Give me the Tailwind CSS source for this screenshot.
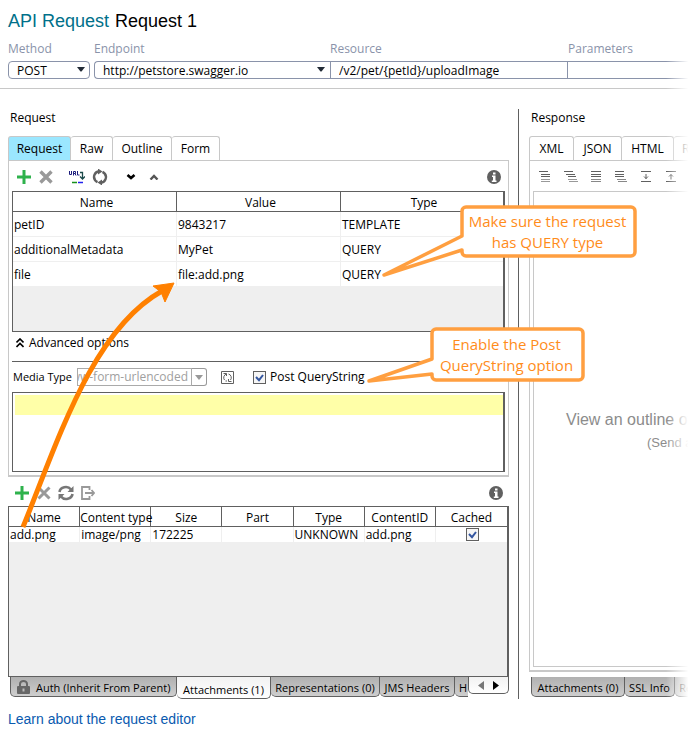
<!DOCTYPE html>
<html lang="en">
<head>
  <meta charset="UTF-8" />
  <meta name="viewport" content="width=device-width, initial-scale=1.0"/>
  <title>API Request - Request 1</title>
  <script src="https://cdn.jsdelivr.net/npm/@tailwindcss/browser@4"></script>
</head>
<body class="bg-white text-black text-[12px] leading-[18px] font-['Open_Sans','Noto_Sans',sans-serif]">

  <div class="relative min-h-screen overflow-hidden">

    <!-- Header -->
    <header class="border-b border-[#c8c8c8] pl-2 pb-[9px]">
      <h1 class="pt-[9px] flex gap-[6px] text-[18px] leading-6 font-['Liberation_Sans',Arial,sans-serif]">
        <span class="text-[#00708a]">API Request</span>
        <span>Request 1</span>
      </h1>
      <div class="mt-[7px] grid grid-cols-[86fr_236fr_238fr_130fr] text-[#8a93aa]">
        <label for="method">Method</label>
        <label for="endpoint">Endpoint</label>
        <label for="resource">Resource</label>
        <label for="params">Parameters</label>
      </div>
      <div class="mt-[3px] grid grid-cols-[82fr_240fr_237fr_131fr] h-[18px]">
        <div class="relative">
          <select id="method" class="block w-full h-[18px] appearance-none rounded-[4px] border border-[#8a93aa] bg-white pl-2 pt-px leading-4">
            <option>POST</option>
          </select>
          <svg class="absolute right-[5px] top-[6px] pointer-events-none" width="8" height="5"><path d="M0 0h8L4.500 4.500h-1z" fill="#222b36"/></svg>
        </div>
        <div class="relative pl-1">
          <select id="endpoint" class="block w-full h-[18px] appearance-none rounded-l-[4px] border border-r-0 border-[#8a93aa] bg-white pl-2 pt-px leading-4">
            <option>http://petstore.swagger.io</option>
          </select>
          <svg class="absolute right-[5px] top-[6px] pointer-events-none" width="8" height="5"><path d="M0 0h8L4.500 4.500h-1z" fill="#222b36"/></svg>
        </div>
        <input id="resource" type="text" value="/v2/pet/{petId}/uploadImage" class="min-w-0 h-[18px] border border-r-0 border-[#8a93aa] pl-2 pt-[2px]" />
        <input id="params" type="text" class="min-w-0 h-[18px] border border-r-0 border-[#8a93aa] pl-2 pt-[2px]" />
      </div>
    </header>

    <main class="grid grid-cols-[518fr_180fr] pt-5">

      <!-- Request side -->
      <section class="relative min-w-0 pl-2 pr-[9px] flex flex-col">
        <h2 class="h-[27px] pl-[2px]">Request</h2>
        <div class="flex h-6">
          <button class="w-[63px] rounded-t-[3px] border border-b-0 border-[#c8c8c8] bg-[#9be7ff]">Request</button>
          <button class="w-[42px] rounded-t-[3px] border border-b-0 border-l-0 border-[#c8c8c8]">Raw</button>
          <button class="w-[59px] rounded-t-[3px] border border-b-0 border-l-0 border-[#c8c8c8]">Outline</button>
          <button class="w-12 rounded-t-[3px] border border-b-0 border-l-0 border-[#c8c8c8]">Form</button>
        </div>

        <div class="border border-b-2 border-[#c8c8c8] px-[3px] pb-[3px]">
          <div class="flex items-center h-[30px] pt-[2px] pl-px pr-1">
            <button aria-label="Add" class="w-[22px] flex justify-center"><svg width="14" height="14"><path d="M7 0v14M0 7h14" stroke="#2eb24c" stroke-width="3"/></svg></button>
            <button aria-label="Remove" class="w-[22px] flex justify-center"><svg width="14" height="14"><path d="M1.500 1.500l11 11M12.500 1.500l-11 11" stroke="#999" stroke-width="3.400"/></svg></button>
            <button aria-label="Update from URL" class="ml-[9px] w-[22px] flex justify-center">
              <svg width="16" height="14" viewBox="0 0 16 14">
                <path d="M.5 1v3.500h2V1M4.500 5.500V1.500h2v2h-2M6 3.500l1 2M8.500 1v4h2" fill="none" stroke="#1c1c7c"/>
                <path d="M11 2.500h2.500v6M11 6.500L13.500 9 16 6.500" fill="none" stroke="#1b4a4a" stroke-width="1.300"/>
                <path d="M3 12.500h5" stroke="#18901c" stroke-width="1.500"/><path d="M9 12.500h5" stroke="#2222ee" stroke-width="1.500"/>
              </svg>
            </button>
            <button aria-label="Refresh" class="ml-px w-[22px] flex justify-center">
              <svg width="16" height="16" viewBox="0 0 16 16" fill="none" stroke="#606060" stroke-width="2.400">
                <path d="M3.200 11.500A5.800 5.800 0 0 1 7 2.300M10.500 2.900a5.800 5.800 0 0 1 3.300 4.500M12.800 4.500A5.800 5.800 0 0 1 9 13.700M5.500 13.100a5.800 5.800 0 0 1-3.300-4.500"/>
                <path d="M6 -.5l4.500 3-4.500 3zM10 10.500l-4.500 3 4.500 3z" fill="#606060" stroke="none"/>
              </svg>
            </button>
            <button aria-label="Move down" class="ml-[9px] w-[22px] flex justify-center"><svg width="10" height="6"><path d="M1.500 1l3.500 3 3.500-3" fill="none" stroke="#000" stroke-width="2.600"/></svg></button>
            <button aria-label="Move up" class="ml-px w-[22px] flex justify-center"><svg width="10" height="6"><path d="M1.500 5.500l3.500-3.500 3.500 3.500" fill="none" stroke="#555" stroke-width="2.400"/></svg></button>
            <button aria-label="Info" class="ml-auto"><svg width="14" height="14"><circle cx="7" cy="7" r="7" fill="#606060"/><path d="M6 2.500h2.500v2H6zM5 5.500h3.500v5h1v1.500H4.800v-1.500H6V7H5z" fill="#fff"/></svg></button>
          </div>

          <div class="h-[141px] border border-r-2 border-[#606060] bg-[#efefef]">
            <table class="w-full table-fixed border-separate border-spacing-0 bg-white">
              <thead>
                <tr class="h-5">
                  <th class="w-[164px] p-0 pl-1 pt-[2px] leading-[17px] font-normal border-r border-b border-[#606060]">Name</th>
                  <th class="w-[164px] p-0 pl-1 pt-[2px] leading-[17px] font-normal border-r border-b border-[#606060]">Value</th>
                  <th class="p-0 pl-1 pt-[2px] leading-[17px] font-normal border-b border-[#606060]">Type</th>
                </tr>
              </thead>
              <tbody>
                <tr class="h-[25px]">
                  <td class="p-0 pt-[2px] pl-px border-r border-b border-[#efefef]">petID</td>
                  <td class="p-0 pt-[2px] pl-px border-r border-b border-[#efefef]">9843217</td>
                  <td class="p-0 pt-[2px] pl-px border-b border-[#efefef]">TEMPLATE</td>
                </tr>
                <tr class="h-[25px]">
                  <td class="p-0 pt-[2px] pl-px border-r border-b border-[#efefef]">additionalMetadata</td>
                  <td class="p-0 pt-[2px] pl-px border-r border-b border-[#efefef]">MyPet</td>
                  <td class="p-0 pt-[2px] pl-px border-b border-[#efefef]">QUERY</td>
                </tr>
                <tr class="h-[25px]">
                  <td class="p-0 pt-[2px] pl-px border-r border-b border-[#efefef]">file</td>
                  <td class="p-0 pt-[2px] pl-px border-r border-b border-[#efefef]">file:add.png</td>
                  <td class="p-0 pt-[2px] pl-px border-b border-[#efefef]">QUERY</td>
                </tr>
              </tbody>
            </table>
          </div>

          <div class="h-[30px] border-b border-[#606060]">
            <button class="flex items-center gap-[5px] h-[22px] pl-1">
              <svg width="8" height="10" fill="none" stroke="#000" stroke-width="1.600"><path d="M.5 4.500L4 1l3.500 3.500M.5 9L4 5.500 7.500 9"/></svg>
              Advanced options
            </button>
          </div>

          <div class="flex items-center h-[30px] pl-px">
            <label for="media" class="w-16 whitespace-nowrap text-[11px]">Media Type</label>
            <input id="media" dir="rtl" disabled value="application/x-www-form-urlencoded" class="w-[115px] h-[18px] border border-[#aaa] pr-[3px] text-[#a0a0a0]" />
            <button disabled aria-label="Media types" class="w-[15px] h-[18px] flex items-center justify-center rounded-r-[3px] border border-l-0 border-[#999]"><svg width="8" height="5"><path d="M0 0h8L4 5z" fill="#999"/></svg></button>
            <button aria-label="Recreate" class="ml-[14px]">
              <svg width="13" height="13" fill="none" stroke="#606060">
                <path d="M.5.5h12v12H.5z"/>
                <path d="M3.500 9A3.800 3.800 0 0 1 5.500 3M7.500 3a3.800 3.800 0 0 1 2 6M2.500 2.500h3V5M10.500 10.500h-3V8M4.500 10h1.500"/>
              </svg>
            </button>
            <label class="ml-[19px] flex items-center gap-1">
              <span class="relative flex">
                <input type="checkbox" checked class="appearance-none size-[13px] border border-[#606060] bg-[#f6f6f6]" />
                <svg class="absolute left-[2px] top-[3px] pointer-events-none" width="9" height="8"><path d="M1 3l3 3.200L8 1" fill="none" stroke="#3456a0" stroke-width="2"/></svg>
              </span>
              Post QueryString
            </label>
          </div>

          <div class="relative h-20 border border-r-2 border-[#606060] pl-[2px] pt-[2px]">
            <div class="h-5 bg-[#ffffa8]"></div>
            <textarea aria-label="Body" class="absolute inset-0 resize-none bg-transparent px-1"></textarea>
          </div>
        </div>

        <!-- Attachments -->
        <div class="flex items-center h-[29px] pt-[2px] pl-[3px] pr-[6px]">
          <button aria-label="Add attachment" class="w-[22px] flex justify-center"><svg width="14" height="14"><path d="M7 0v14M0 7h14" stroke="#2eb24c" stroke-width="3"/></svg></button>
          <button aria-label="Remove attachment" class="w-[22px] flex justify-center"><svg width="14" height="14"><path d="M1.500 1.500l11 11M12.500 1.500l-11 11" stroke="#999" stroke-width="3"/></svg></button>
          <button aria-label="Reload" class="w-[22px] flex justify-center">
            <svg width="16" height="16" viewBox="0 0 16 16" fill="none" stroke="#777" stroke-width="2.600">
              <path d="M1.500 7a6.300 5.500 0 0 1 11.500-2.500M14.500 9A6.300 5.500 0 0 1 3 11.500"/>
              <path d="M15.500 1v6h-6zM.5 15V9h6z" fill="#777" stroke="none"/>
            </svg>
          </button>
          <button aria-label="Export" class="w-[22px] flex justify-center"><svg width="14" height="14" fill="none" stroke="#999" stroke-width="1.800"><path d="M8.500 4V1H1v12h7.500v-3M4 7h9M10.500 4l2.500 3-2.500 3"/></svg></button>
          <button aria-label="Attachment info" class="ml-auto"><svg width="14" height="14"><circle cx="7" cy="7" r="7" fill="#606060"/><path d="M6 2.500h2.500v2H6zM5 5.500h3.500v5h1v1.500H4.800v-1.500H6V7H5z" fill="#fff"/></svg></button>
        </div>

        <div class="h-[171px] border border-r-2 border-[#606060] bg-[#efefef]">
          <table class="w-full table-fixed border-separate border-spacing-0 bg-white whitespace-nowrap">
            <thead>
              <tr class="h-5">
                <th class="p-0 pt-[2px] leading-[17px] font-normal border-r border-b border-[#606060]">Name</th>
                <th class="p-0 pt-[2px] leading-[17px] font-normal border-r border-b border-[#606060]">Content type</th>
                <th class="p-0 pt-[2px] leading-[17px] font-normal border-r border-b border-[#606060]">Size</th>
                <th class="p-0 pt-[2px] leading-[17px] font-normal border-r border-b border-[#606060]">Part</th>
                <th class="p-0 pt-[2px] leading-[17px] font-normal border-r border-b border-[#606060]">Type</th>
                <th class="p-0 pt-[2px] leading-[17px] font-normal border-r border-b border-[#606060]">ContentID</th>
                <th class="p-0 pt-[2px] leading-[17px] font-normal border-b border-[#606060]">Cached</th>
              </tr>
            </thead>
            <tbody>
              <tr class="leading-[15px]">
                <td class="py-0 px-px border-r border-[#efefef]">add.png</td>
                <td class="py-0 px-px border-r border-[#efefef]">image/png</td>
                <td class="py-0 px-px border-r border-[#efefef]">172225</td>
                <td class="py-0 px-px border-r border-[#efefef]"></td>
                <td class="py-0 px-px border-r border-[#efefef]">UNKNOWN</td>
                <td class="py-0 px-px border-r border-[#efefef]">add.png</td>
                <td class="p-0 pl-[2px]">
                  <label class="relative flex w-[13px] mx-auto">
                    <input type="checkbox" checked aria-label="Cached" class="appearance-none size-[13px] border border-[#606060] bg-[#f6f6f6]" />
                    <svg class="absolute left-[2px] top-[3px] pointer-events-none" width="9" height="8"><path d="M1 3l3 3.200L8 1" fill="none" stroke="#3456a0" stroke-width="2"/></svg>
                  </label>
                </td>
              </tr>
            </tbody>
          </table>
        </div>

        <div class="flex items-start h-[22px] pl-[2px] whitespace-nowrap text-[11px]">
          <button class="w-[167px] h-[20px] flex items-center gap-[6px] pt-[2px] pl-[6px] rounded-b-[5px] border border-t-0 border-[#606060] bg-linear-to-b from-[#b0b0b0] to-[#cecece]">
            <svg class="mb-[2px]" width="13" height="14"><path d="M3 7V4a3.500 3 0 0 1 7 0v3" fill="none" stroke="#666" stroke-width="2"/><rect y="6" width="13" height="8" rx="1" fill="#666"/><path d="M6.500 8.500v3" stroke="#bbb" stroke-width="2"/></svg>
            Auth (Inherit From Parent)
          </button>
          <button class="w-[94px] h-[22px] pt-[4px] rounded-b-[5px] border border-t-0 border-l-0 border-[#606060] bg-linear-to-b from-[#f2f2f2] to-white">Attachments (1)</button>
          <button class="w-[109px] h-[20px] pt-[2px] rounded-b-[5px] border border-t-0 border-l-0 border-[#606060] bg-linear-to-b from-[#b0b0b0] to-[#cecece]">Representations (0)</button>
          <button class="w-[75px] h-[20px] pt-[2px] rounded-b-[5px] border border-t-0 border-l-0 border-[#606060] bg-linear-to-b from-[#b0b0b0] to-[#cecece]">JMS Headers</button>
          <button class="w-[13px] h-[20px] pt-[2px] pl-1 overflow-hidden text-left rounded-bl-[5px] border-b border-[#606060] bg-linear-to-b from-[#b0b0b0] to-[#cecece]">H</button>
          <div class="flex-1 flex items-center justify-center gap-[9px] h-[17px] pt-px rounded-b-[5px] border border-t-0 border-[#606060] bg-linear-to-b from-[#f2f2f2] to-white">
            <button aria-label="Previous tabs"><svg width="6" height="9"><path d="M6 0v9L0 4.500z" fill="#777"/></svg></button>
            <button aria-label="Next tabs"><svg width="6" height="9"><path d="M0 0v9l6-4.500z" fill="#000"/></svg></button>
          </div>
        </div>

        <!-- Annotations -->
        <svg class="absolute left-0 -top-5 pointer-events-none" width="650" height="560" fill="none">
          <path d="M23 438C58 352 92 241 162 202" stroke="#ff8000" stroke-width="5"/>
          <path d="M174 194L165 213L161 203L153 197Z" fill="#ff8000" stroke="#ff8000"/>
          <g fill="#fff" stroke="#ff9f40" stroke-width="3.500" stroke-linejoin="round">
            <path d="M466 118H631a4 4 0 0 1 4 4V163a4 4 0 0 1-4 4H466a4 4 0 0 1-4-4V161L384 186L462 147V122a4 4 0 0 1 4-4Z"/>
            <path d="M436 240H579a4 4 0 0 1 4 4V287a4 4 0 0 1-4 4H436a4 4 0 0 1-4-4V285L369 292L432 270V244a4 4 0 0 1 4-4Z"/>
          </g>
        </svg>
        <p class="absolute left-[460px] top-[102px] w-[175px] text-center whitespace-nowrap text-[15px] leading-[21px] text-[#ff8c1a]">Make sure the request<br>has QUERY type</p>
        <p class="absolute left-[430px] top-[225px] w-[153px] text-center whitespace-nowrap text-[15px] leading-[21px] text-[#ff8c1a]">Enable the Post<br>QueryString option</p>
      </section>

      <!-- Response side -->
      <section class="min-w-0 border-l border-[#606060] pl-[10px] flex flex-col whitespace-nowrap">
        <h2 class="h-[27px] pl-[2px]">Response</h2>
        <div class="flex h-6">
          <button class="w-[45px] shrink-0 rounded-t-[3px] border border-b-0 border-[#c8c8c8]">XML</button>
          <button class="w-12 shrink-0 rounded-t-[3px] border border-b-0 border-l-0 border-[#c8c8c8]">JSON</button>
          <button class="w-[52px] shrink-0 rounded-t-[3px] border border-b-0 border-l-0 border-[#c8c8c8]">HTML</button>
          <button class="flex-1 rounded-t-[3px] border border-b-0 border-l-0 border-[#c8c8c8] overflow-hidden pl-2 text-left">RAW</button>
        </div>
        <div class="flex-1 flex flex-col border-l border-t border-b-2 border-[#c8c8c8] pl-[3px] pb-[3px]">
          <div class="flex items-center h-[30px] pt-[2px]">
            <button aria-label="Level 1" class="w-[25px] flex justify-center"><svg width="13" height="12" stroke="#606060"><path d="M0 .5h9M2 3.500h9M2 5.500h9"/><path d="M2 8.500h9M2 10.500h9" stroke="#999"/></svg></button>
            <button aria-label="Level 2" class="w-[25px] flex justify-center"><svg width="14" height="12" stroke="#606060"><path d="M0 .5h9M2 3.500h9M4 5.500h8"/><path d="M4 8.500h9M5 10.500h9" stroke="#999"/></svg></button>
            <button aria-label="Level 3" class="w-[25px] flex justify-center"><svg width="10" height="12" stroke="#606060"><path d="M0 .5h10M0 3.500h10M0 5.500h10"/><path d="M0 8.500h10M0 10.500h10" stroke="#888"/></svg></button>
            <button aria-label="Level 4" class="w-[25px] flex justify-center"><svg width="12" height="12" stroke="#606060"><path d="M0 .5h9M0 3.500h9M0 5.500h9"/><path d="M2 8.500h9M3 10.500h9" stroke="#888"/></svg></button>
            <button aria-label="Expand" class="w-[25px] flex justify-center"><svg width="10" height="12" stroke="#606060" fill="none"><path d="M0 .5h10M0 10.500h10M5 3v5M3 5.500l2 2 2-2"/></svg></button>
            <button aria-label="Collapse" class="w-[25px] flex justify-center"><svg width="10" height="12" stroke="#606060" fill="none"><path d="M0 .5h10M0 10.500h10M5 8.500v-5M3 5.500l2-2 2 2"/></svg></button>
          </div>
          <div class="flex-1 overflow-hidden border border-r-0 border-[#c8c8c8] pt-[217px] font-['Liberation_Sans',Arial,sans-serif] text-[#8c8c8c]">
            <p class="pl-8 text-[16px] leading-[22px]">View an outline of the response</p>
            <p class="pl-[113px] text-[13px] leading-6">(Send a request)</p>
          </div>
        </div>
        <div class="flex items-start h-[27px] pt-[5px] pl-[2px] overflow-hidden text-[11px]">
          <button class="w-[94px] shrink-0 h-[20px] pt-[2px] rounded-b-[5px] border border-t-0 border-[#606060] bg-linear-to-b from-[#b0b0b0] to-[#cecece]">Attachments (0)</button>
          <button class="w-[50px] shrink-0 h-[20px] pt-[2px] rounded-b-[5px] border border-t-0 border-l-0 border-[#606060] bg-linear-to-b from-[#b0b0b0] to-[#cecece]">SSL Info</button>
          <button class="w-[109px] shrink-0 h-[20px] pt-[2px] rounded-b-[5px] border border-t-0 border-l-0 border-[#606060] bg-linear-to-b from-[#b0b0b0] to-[#cecece]">Representations (0)</button>
        </div>
      </section>
    </main>

    <footer class="pl-2 pt-[10px] text-[14px] leading-5 font-['Liberation_Sans',Arial,sans-serif]">
      <a href="#" class="text-[#0a5aaf]">Learn about the request editor</a>
    </footer>

    <!-- Fade out on the right -->
    <div class="absolute inset-y-0 right-0 w-8 bg-linear-to-r from-white/0 to-white to-70% pointer-events-none"></div>
  </div>

</body>
</html>
